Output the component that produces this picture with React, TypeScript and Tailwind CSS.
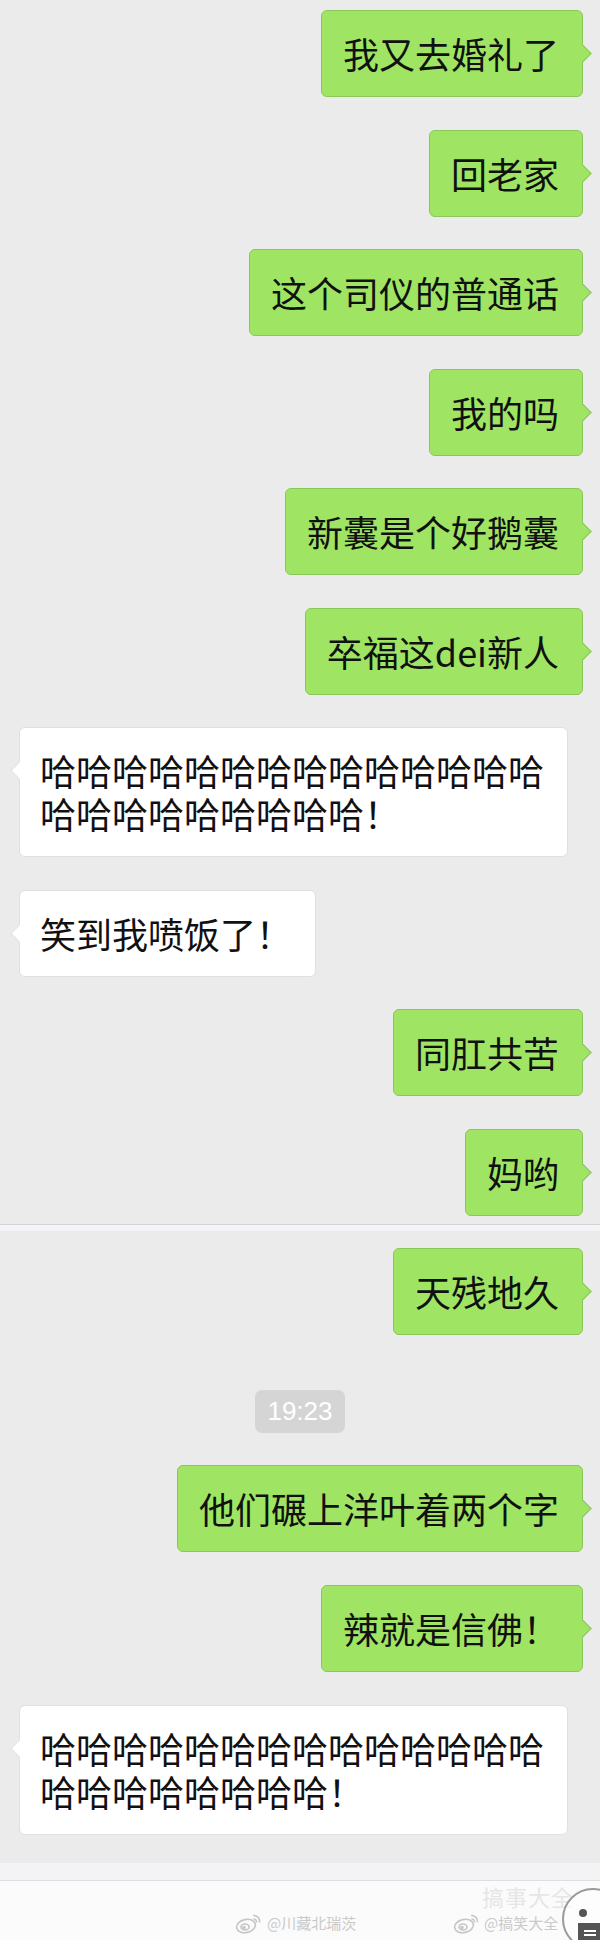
const FONT = { fontFamily: '"Noto Sans CJK SC", "Noto Sans", sans-serif' };

function Mine({ text }: { text: string }) {
	return (
		<div className="flex justify-end pr-[17px]">
			<div className="relative rounded-[6px] border border-[#8ac75a] bg-[#9fe563] pl-[21px] pr-[23px] py-[21px] text-[36px] leading-[43px] text-[#111] whitespace-nowrap">
				{text}
				<span className="absolute right-[-7px] top-[36px] h-[13px] w-[13px] rotate-45 border-t border-r border-[#8ac75a] bg-[#9fe563]" />
			</div>
		</div>
	);
}

function Theirs({ lines }: { lines: string[] }) {
	return (
		<div className="flex justify-start pl-[19px]">
			<div className="relative rounded-[6px] border border-[#e0e0e0] bg-white pl-[20px] pr-[23px] py-[21px] text-[36px] leading-[43px] text-[#111]">
				{lines.map((l, i) => (
					<div key={i} className="whitespace-nowrap">
						{l}
					</div>
				))}
				<span className="absolute left-[-7px] top-[36px] h-[13px] w-[13px] rotate-45 border-l border-b border-[#e0e0e0] bg-white" />
			</div>
		</div>
	);
}

function WeiboLogo() {
	return (
		<svg width="28" height="22" viewBox="0 0 28 22" fill="none" stroke="#c6c6c6" strokeWidth="1.6">
			<ellipse cx="11" cy="14" rx="9.5" ry="6.5" transform="rotate(-12 11 14)" />
			<ellipse cx="10" cy="15" rx="4" ry="3" />
			<circle cx="9" cy="15.5" r="1" fill="#c6c6c6" />
			<path d="M18 3.5 a6 6 0 0 1 6.5 7" />
			<path d="M18.5 7 a3 3 0 0 1 3 3.5" />
		</svg>
	);
}

export default function App() {
	const ha1 = ["哈".repeat(14), "哈".repeat(9) + "！"];
	const ha2 = ["哈".repeat(14), "哈".repeat(8) + "！"];

	return (
		<div className="relative flex h-[1940px] w-[600px] flex-col overflow-hidden bg-[#ebebeb]" style={FONT}>
			<div className="flex flex-col gap-[32.5px] pt-[10px]">
				<Mine text="我又去婚礼了" />
				<Mine text="回老家" />
				<Mine text="这个司仪的普通话" />
				<Mine text="我的吗" />
				<Mine text="新囊是个好鹅囊" />
				<Mine text="卒福这dei新人" />
				<Theirs lines={ha1} />
				<Theirs lines={["笑到我喷饭了！"]} />
				<Mine text="同肛共苦" />
				<Mine text="妈哟" />
			</div>

			{/* seam between the two screenshots */}
			<div className="mt-[8.5px] h-px bg-[#d4d4d4]" />
			<div className="h-[6px] bg-[#f4f4f8]" />

			<div className="mt-[17px] flex flex-col">
				<Mine text="天残地久" />
				<div className="mt-[55px] flex justify-center">
					<div
						className="flex h-[43px] items-center rounded-[7px] bg-[#d5d5d5] px-[12px] text-[26px] text-white"
						style={{ fontFamily: '"Liberation Sans", Arial, sans-serif' }}
					>
						19:23
					</div>
				</div>
				<div className="mt-[32px]">
					<Mine text="他们碾上洋叶着两个字" />
				</div>
				<div className="mt-[33px]">
					<Mine text="辣就是信佛！" />
				</div>
				<div className="mt-[33px]">
					<Theirs lines={ha2} />
				</div>
			</div>

			<div className="mt-[28px] h-[17px] bg-[#f3f3f6]" />
			<div className="h-px bg-[#dedede]" />
			<div className="relative flex-1 bg-[#fbfbfb]">
				<div className="absolute left-[482px] top-[0px] text-[22px] leading-[30px] tracking-[1px] text-[#e6e6e6]">
					搞事大全
				</div>
				<div className="absolute left-[235px] top-[31px] flex items-center gap-[4px] text-[15px] leading-[20px] text-[#cacaca]">
					<WeiboLogo />
					<span>@川藏北瑞茨</span>
				</div>
				<div className="absolute left-[453px] top-[31px] flex items-center gap-[3px] text-[15px] leading-[20px] text-[#cacaca]">
					<WeiboLogo />
					<span>@搞笑大全</span>
				</div>
				<div className="absolute left-[562px] top-[7px] h-[62px] w-[62px] rounded-full border-2 border-[#9a9a9a] bg-white/60">
					<span className="absolute left-[15px] top-[19px] h-[8px] w-[8px] rounded-full bg-[#555]" />
				</div>
				<div className="absolute left-[578px] top-[42px] flex h-[20px] w-[24px] flex-col items-center justify-center gap-[2px] bg-[#555]">
					<span className="h-[2px] w-[12px] bg-white" />
					<span className="h-[2px] w-[12px] bg-white" />
				</div>
			</div>
		</div>
	);
}
